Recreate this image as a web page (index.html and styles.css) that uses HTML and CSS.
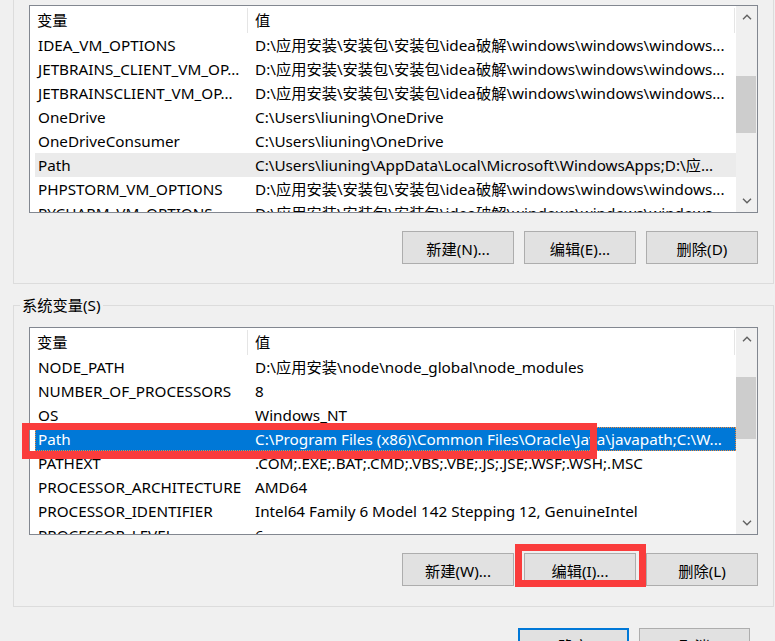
FILE: index.html
```html
<!DOCTYPE html>
<html lang="zh-CN">
<head>
    <meta charset="UTF-8">
    <title>环境变量</title>
    <link rel="stylesheet" href="styles.css">
</head>
<body>

    <div class="group group-user">
        <div class="list">
            <div class="list-body">
                <div class="list-head">
                    <div class="head-name">变量</div>
                    <div class="head-value">值</div>
                </div>
                <div class="row"><span class="col-name">IDEA_VM_OPTIONS</span><span class="col-value">D:\应用安装\安装包\安装包\idea破解\windows\windows\windows...</span></div>
                <div class="row"><span class="col-name">JETBRAINS_CLIENT_VM_OP...</span><span class="col-value">D:\应用安装\安装包\安装包\idea破解\windows\windows\windows...</span></div>
                <div class="row"><span class="col-name">JETBRAINSCLIENT_VM_OP...</span><span class="col-value">D:\应用安装\安装包\安装包\idea破解\windows\windows\windows...</span></div>
                <div class="row"><span class="col-name">OneDrive</span><span class="col-value">C:\Users\liuning\OneDrive</span></div>
                <div class="row"><span class="col-name">OneDriveConsumer</span><span class="col-value">C:\Users\liuning\OneDrive</span></div>
                <div class="row row-hover"><span class="col-name">Path</span><span class="col-value">C:\Users\liuning\AppData\Local\Microsoft\WindowsApps;D:\应...</span></div>
                <div class="row"><span class="col-name">PHPSTORM_VM_OPTIONS</span><span class="col-value">D:\应用安装\安装包\安装包\idea破解\windows\windows\windows...</span></div>
                <div class="row"><span class="col-name">PYCHARM_VM_OPTIONS</span><span class="col-value">D:\应用安装\安装包\安装包\idea破解\windows\windows\windows...</span></div>
            </div>
            <div class="scrollbar">
                <div class="scroll-btn">
                    <svg width="10" height="6" viewBox="0 0 10 6"><polyline points="1,5.2 5,1.2 9,5.2" fill="none" stroke="#606060" stroke-width="1.4"/></svg>
                </div>
                <div class="scroll-track">
                    <div class="thumb thumb-user"></div>
                </div>
                <div class="scroll-btn">
                    <svg width="10" height="6" viewBox="0 0 10 6"><polyline points="1,0.8 5,4.8 9,0.8" fill="none" stroke="#606060" stroke-width="1.4"/></svg>
                </div>
            </div>
        </div>
        <div class="buttons">
            <button class="btn">新建(N)...</button>
            <button class="btn">编辑(E)...</button>
            <button class="btn">删除(D)</button>
        </div>
    </div>

    <div class="group group-system">
        <div class="group-label">系统变量(S)</div>
        <div class="list">
            <div class="list-body">
                <div class="list-head">
                    <div class="head-name">变量</div>
                    <div class="head-value">值</div>
                </div>
                <div class="row"><span class="col-name">NODE_PATH</span><span class="col-value">D:\应用安装\node\node_global\node_modules</span></div>
                <div class="row"><span class="col-name">NUMBER_OF_PROCESSORS</span><span class="col-value">8</span></div>
                <div class="row"><span class="col-name">OS</span><span class="col-value">Windows_NT</span></div>
                <div class="row row-selected"><span class="col-name">Path</span><span class="col-value">C:\Program Files (x86)\Common Files\Oracle\Java\javapath;C:\W...</span></div>
                <div class="row"><span class="col-name">PATHEXT</span><span class="col-value">.COM;.EXE;.BAT;.CMD;.VBS;.VBE;.JS;.JSE;.WSF;.WSH;.MSC</span></div>
                <div class="row"><span class="col-name">PROCESSOR_ARCHITECTURE</span><span class="col-value">AMD64</span></div>
                <div class="row"><span class="col-name">PROCESSOR_IDENTIFIER</span><span class="col-value">Intel64 Family 6 Model 142 Stepping 12, GenuineIntel</span></div>
                <div class="row"><span class="col-name">PROCESSOR_LEVEL</span><span class="col-value">6</span></div>
            </div>
            <div class="scrollbar">
                <div class="scroll-btn">
                    <svg width="10" height="6" viewBox="0 0 10 6"><polyline points="1,5.2 5,1.2 9,5.2" fill="none" stroke="#606060" stroke-width="1.4"/></svg>
                </div>
                <div class="scroll-track">
                    <div class="thumb thumb-system"></div>
                </div>
                <div class="scroll-btn">
                    <svg width="10" height="6" viewBox="0 0 10 6"><polyline points="1,0.8 5,4.8 9,0.8" fill="none" stroke="#606060" stroke-width="1.4"/></svg>
                </div>
            </div>
        </div>
        <div class="buttons">
            <button class="btn">新建(W)...</button>
            <button class="btn">编辑(I)...</button>
            <button class="btn">删除(L)</button>
        </div>
    </div>

    <div class="dialog-buttons">
        <button class="btn btn-default">确定</button>
        <button class="btn">取消</button>
    </div>

    <!-- red annotation boxes -->
    <div class="mark mark-path"></div>
    <div class="mark mark-edit"></div>

</body>
</html>
```

FILE: styles.css
```css
* {
    box-sizing: border-box;
}

body {
    margin: 0;
    width: 775px;
    height: 641px;
    overflow: hidden;
    position: relative;
    background: #f0f0f0;
    font-family: "Noto Sans", "Noto Sans CJK SC", sans-serif;
    font-size: 15.25px;
    color: #000;
}

.group {
    position: relative;
    margin-left: 13px;
    width: 761px;
    border: 1px solid #dcdcdc;
    padding: 0 15px;
}

.group-user {
    border-top: none;
    padding-top: 5px;
    padding-bottom: 19px;
}

.group-system {
    margin-top: 21px;
    padding-top: 21px;
    padding-bottom: 20px;
}

.group-label {
    position: absolute;
    left: 6px;
    top: -11px;
    padding: 0 2px;
    line-height: 20px;
    background: #f0f0f0;
}

.list {
    height: 208px;
    border: 1px solid #828790;
    background: #fff;
    display: flex;
    overflow: hidden;
}

.list-body {
    flex: 1;
    overflow: hidden;
}

.list-head {
    display: flex;
    height: 27px;
    padding-top: 2px;
    line-height: 25px;
}

.head-name {
    width: 218px;
    padding-left: 7px;
    border-right: 1px solid #e5e5e5;
}

.head-value {
    width: 487px;
    padding-left: 7px;
    border-right: 1px solid #e5e5e5;
}

.row {
    display: flex;
    margin-left: 5px;
    height: 24px;
    line-height: 24px;
    white-space: nowrap;
}

.col-name {
    width: 212px;
    padding-left: 3px;
    overflow: hidden;
}

.col-value {
    flex: 1;
    padding-left: 8px;
    overflow: hidden;
}

.row-hover {
    background: #ebebeb;
}

.row-selected {
    background: #0078d7;
    color: #fff;
    outline: 1px dotted #f08a3c;
    outline-offset: -1px;
}

.scrollbar {
    width: 21px;
    background: #f0f0f0;
    display: flex;
    flex-direction: column;
}

.scroll-btn {
    height: 22px;
    display: flex;
    align-items: center;
    justify-content: center;
}

.scroll-track {
    flex: 1;
}

.thumb {
    margin: 0 1px 0 0;
    background: #cdcdcd;
}

.thumb-user {
    margin-top: 48px;
    height: 57px;
}

.thumb-system {
    margin-top: 27px;
    height: 62px;
}

.buttons {
    margin-top: 18px;
    display: flex;
    justify-content: flex-end;
    gap: 10px;
}

.btn {
    width: 112px;
    height: 33px;
    background: #e1e1e1;
    border: 1px solid #adadad;
    font-family: "Noto Sans", "Noto Sans CJK SC", sans-serif;
    font-size: 15.25px;
    color: #000;
    padding: 0;
}

.dialog-buttons {
    margin-top: 21px;
    padding-right: 25px;
    display: flex;
    justify-content: flex-end;
    gap: 10px;
}

.dialog-buttons .btn {
    width: 111px;
    height: 34px;
}

.btn-default {
    border: 2px solid #0078d7;
}

.mark {
    position: absolute;
    border: 7px solid #fa3c3c;
}

.mark-path {
    left: 22px;
    top: 423px;
    width: 575px;
    height: 36px;
    border-bottom-width: 8px;
}

.mark-edit {
    left: 515px;
    top: 544px;
    width: 131px;
    height: 43px;
}
```
